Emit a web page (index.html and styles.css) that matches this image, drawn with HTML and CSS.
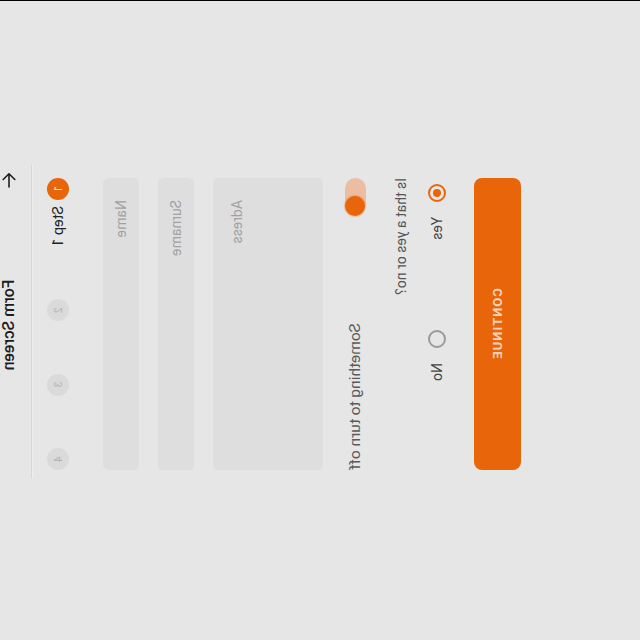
FILE: index.html
```html
<!DOCTYPE html>
<html>
<head>
<meta charset="utf-8">
<link rel="stylesheet" href="styles.css">
</head>
<body>
<div class="screen">
  <div class="page">
    <header class="appbar">
      <svg class="back" width="16" height="16" viewBox="0 0 16 16"><path d="M15 8H1.8M7.5 2.2L1.8 8l5.7 5.8" fill="none" stroke="#1e1e1e" stroke-width="1.6" stroke-linecap="round" stroke-linejoin="round"/></svg>
      <h1 class="title">Form Screen</h1>
      <span></span>
    </header>
    <main class="content">
      <div class="stepper">
        <div class="step active"><span class="dot">1</span><span class="step-label">Step 1</span></div>
        <div class="step"><span class="dot">2</span></div>
        <div class="step"><span class="dot">3</span></div>
        <div class="step"><span class="dot">4</span></div>
      </div>
      <div class="field name">Name</div>
      <div class="field surname">Surname</div>
      <div class="field area">Adress</div>
      <div class="switch-row">
        <span class="switch"><span class="thumb"></span></span>
        <span class="switch-label">Something to turn off</span>
      </div>
      <p class="question">Is that a yes or no?</p>
      <div class="radios">
        <label class="radio"><span class="ring on"></span><span>Yes</span></label>
        <label class="radio"><span class="ring"></span><span>No</span></label>
      </div>
      <button class="btn">CONTINUE</button>
    </main>
  </div>
</div>
</body>
</html>
```
FILE: styles.css
```css
html, body {
  margin: 0;
  padding: 0;
  width: 640px;
  height: 640px;
  overflow: hidden;
  background: #e6e6e6;
}
.screen {
  width: 640px;
  height: 640px;
  box-sizing: border-box;
  background: #e6e6e6;
  box-shadow: inset 1px 0 0 #000;
  transform: matrix(0, 1, 1, 0, 0, 0);
  transform-origin: 0 0;
  font-family: Roboto, "Liberation Sans", sans-serif;
  color: #222;
}
.page {
  margin-left: 165px;
  width: 313px;
}
.appbar {
  height: 32px;
  box-sizing: border-box;
  padding: 0 0 14px 7px;
  display: grid;
  grid-template-columns: 1fr auto 1fr;
  align-items: center;
  border-bottom: 1px solid #d6d6d6;
  box-shadow: 0 1px 0 #eeeeee;
}
.back { display: block; }
.title {
  margin: 0;
  font-size: 16px;
  font-weight: 500;
  line-height: 18px;
  color: #1e1e1e;
}
.content {
  margin-left: 13px;
  width: 292px;
}
.stepper {
  margin-top: 15px;
  height: 22px;
  display: flex;
  justify-content: space-between;
  align-items: center;
}
.step {
  display: flex;
  align-items: center;
  gap: 6px;
}
.dot {
  width: 22px;
  height: 22px;
  border-radius: 50%;
  background: #dadada;
  color: #b3b3b3;
  font-size: 10px;
  display: flex;
  align-items: center;
  justify-content: center;
}
.active .dot {
  background: #e8650a;
  color: #fff;
}
.step-label {
  font-size: 14.5px;
  color: #222;
}
.field {
  box-sizing: border-box;
  background: #dedede;
  border-radius: 6px;
  color: #a2a2a2;
  font-size: 14px;
  padding: 0 22px;
  height: 36px;
  display: flex;
  align-items: center;
}
.name { margin-top: 34px; }
.surname { margin-top: 19px; }
.area {
  margin-top: 19px;
  height: 110px;
  align-items: flex-start;
  padding-top: 16px;
}
.switch-row {
  margin-top: 21px;
  height: 22px;
  display: flex;
  align-items: center;
  justify-content: space-between;
}
.switch {
  width: 36px;
  height: 21px;
  border-radius: 11px;
  background: #ebbea2;
  display: flex;
  justify-content: flex-end;
  align-items: center;
}
.thumb {
  width: 20px;
  height: 20px;
  border-radius: 50%;
  background: #e8650a;
  box-shadow: 0 0 1px 1px rgba(232,101,10,0.3);
  margin-right: -2px;
}
.switch-label {
  font-size: 15.5px;
  color: #5a5a5a;
}
.question {
  margin: 27px 0 0;
  font-size: 14px;
  line-height: 16px;
  color: #555;
}
.radios {
  margin-top: 18px;
  height: 20px;
  display: grid;
  grid-template-columns: 1fr 1fr;
}
.radio {
  display: flex;
  align-items: center;
  gap: 15px;
  padding-left: 6px;
  font-size: 14px;
  color: #444;
}
.ring {
  width: 18px;
  height: 18px;
  box-sizing: border-box;
  border-radius: 50%;
  border: 2px solid #9a9a9a;
  display: flex;
  align-items: center;
  justify-content: center;
}
.ring.on { border-color: #e8650a; }
.ring.on::after {
  content: "";
  width: 8px;
  height: 8px;
  border-radius: 50%;
  background: #e8650a;
}
.btn {
  display: block;
  margin-top: 27px;
  width: 292px;
  height: 47px;
  border: 0;
  border-radius: 8px;
  background: #e8650a;
  color: #f6d3ba;
  font-family: Roboto, "Liberation Sans", sans-serif;
  font-size: 13px;
  font-weight: 700;
  letter-spacing: 1px;
}
```
